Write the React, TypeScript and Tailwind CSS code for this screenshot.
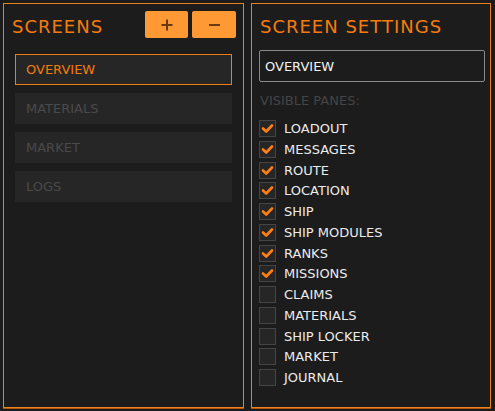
import React from "react";

const font = { fontFamily: '"DejaVu Sans", "Liberation Sans", sans-serif' };

const screens = ["OVERVIEW", "MATERIALS", "MARKET", "LOGS"];
const panes: [string, boolean][] = [
  ["LOADOUT", true],
  ["MESSAGES", true],
  ["ROUTE", true],
  ["LOCATION", true],
  ["SHIP", true],
  ["SHIP MODULES", true],
  ["RANKS", true],
  ["MISSIONS", true],
  ["CLAIMS", false],
  ["MATERIALS", false],
  ["SHIP LOCKER", false],
  ["MARKET", false],
  ["JOURNAL", false],
];

function Check() {
  return (
    <svg width="13" height="11" viewBox="0 0 13 11">
      <polyline
        points="2,5.5 5.2,8.5 11,2.5"
        fill="none"
        stroke="#ff7f0f"
        strokeWidth="2.6"
        strokeLinecap="round"
        strokeLinejoin="round"
      />
    </svg>
  );
}

export default function App() {
  return (
    <div
      className="w-[495px] h-[411px] bg-[#1b1b1b] p-[3px] flex gap-[7px] overflow-hidden"
      style={font}
    >
      {/* Left panel */}
      <div className="w-[241px] h-[405px] border border-[#e8821e] shadow-[0_1px_0_#b0560f] bg-[#1c1c1c] flex flex-col">
        <div className="flex items-start justify-between pt-[7px] pl-[8px] pr-[7px]">
          <div className="mt-[7px] text-[18px] leading-[18px] tracking-[1px] text-[#f57c0c]">
            SCREENS
          </div>
          <div className="flex gap-[4px]">
            <div className="w-[43px] h-[27px] rounded-[2px] bg-[#ff9933] flex items-center justify-center">
              <svg width="12" height="12" viewBox="0 0 12 12">
                <path d="M6 0.5V11.5M0.5 6H11.5" stroke="#6b3a12" strokeWidth="2" />
              </svg>
            </div>
            <div className="w-[44px] h-[27px] rounded-[2px] bg-[#ff9933] flex items-center justify-center">
              <svg width="11" height="4" viewBox="0 0 11 4">
                <path d="M0 2H11" stroke="#6b3a12" strokeWidth="2" />
              </svg>
            </div>
          </div>
        </div>
        <div className="mt-[16px] px-[11px] flex flex-col gap-[8px]">
          {screens.map((s, i) => (
            <div
              key={s}
              className={
                i === 0
                  ? "h-[31px] border border-[#f07d12] bg-[#262626] pl-[10px] flex items-center text-[13px] leading-[13px] text-[#f57c0c]"
                  : "h-[31px] border border-[#262626] bg-[#262626] pl-[10px] flex items-center text-[13px] leading-[13px] text-[#4a4a4a]"
              }
            >
              {s}
            </div>
          ))}
        </div>
      </div>

      {/* Right panel */}
      <div className="w-[240px] h-[405px] border border-[#e8821e] shadow-[0_1px_0_#b0560f] bg-[#1c1c1c] flex flex-col">
        <div className="mt-[14px] pl-[8px] text-[18px] leading-[18px] tracking-[1px] text-[#f57c0c]">
          SCREEN SETTINGS
        </div>
        <div className="mt-[14px] ml-[7px] mr-[5px] h-[32px] border border-[#8a8a8a] rounded-[2px] bg-[#1c1c1c] pl-[5px] flex items-center text-[13px] leading-[13px] text-[#f2f2f2]">
          OVERVIEW
        </div>
        <div className="mt-[11.5px] pl-[8px] text-[13px] leading-[13px] text-[#454545]">
          VISIBLE PANES:
        </div>
        <div className="mt-[13.5px] pl-[7px] flex flex-col gap-[3.75px]">
          {panes.map(([name, on]) => (
            <div key={name} className="flex items-center gap-[8px] h-[17px]">
              <div className="w-[17px] h-[17px] bg-[#262626] border border-[#454545] flex items-center justify-center">
                {on && <Check />}
              </div>
              <span className="text-[13px] leading-[13px] text-[#ececec]">{name}</span>
            </div>
          ))}
        </div>
      </div>
    </div>
  );
}
